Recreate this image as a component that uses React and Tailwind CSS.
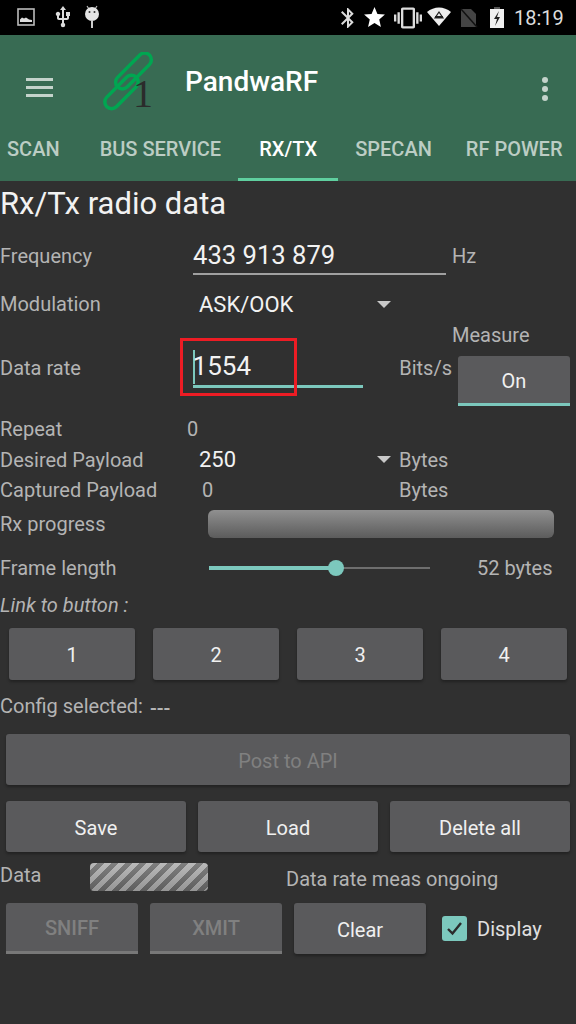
import { MdBluetooth, MdStar, MdUsb, MdVibration } from "react-icons/md";

const btn = "flex items-center justify-center rounded-[3px] bg-[#5a5a5c] shadow-[0_2px_3px_rgba(0,0,0,0.3)] text-[20px] pt-[2px] text-[#f0f0f0]";
const label = "text-[20px] text-[#b4b4b4]";

function StatusBar() {
  return (
    <div className="h-[35px] bg-black flex items-center text-[#dcdcdc]">
      <svg width="18" height="18" viewBox="0 0 18 18" className="ml-[17px] -mt-[1px]">
        <rect x="1" y="1" width="16" height="16" fill="none" stroke="#bbb" strokeWidth="1.6" />
        <path d="M3 14v-2.5l2-2 2 1 2-1 3 2 3 .5v2z" fill="#ddd" />
      </svg>
      <MdUsb size={24} className="ml-[16px] -mt-[2px]" />
      <svg width="16" height="23" viewBox="0 0 16 23" className="ml-[9px] -mt-[2px]">
        <path d="M3 1l2 3M13 1l-2 3" stroke="#bbb" strokeWidth="1.2" />
        <circle cx="8" cy="9" r="7" fill="#e4e4e4" />
        <circle cx="5.5" cy="7" r="1" fill="#333" />
        <circle cx="10.5" cy="7" r="1" fill="#333" />
        <rect x="7" y="15" width="2" height="8" fill="#ccc" />
      </svg>
      <MdBluetooth size={24} className="ml-[236px]" />
      <MdStar size={25} className="ml-[2px] text-white" />
      <MdVibration size={28} className="ml-[7px]" />
      <svg width="24" height="20" viewBox="0 0 24 20" className="ml-[5px] -mt-[2px]">
        <path d="M0 5C7-1 17-1 24 5L12 19z" fill="#eee" />
        <path d="M12 5l4 6H8z" fill="none" stroke="#222" strokeWidth="1.2" />
        <rect x="8" y="9" width="8" height="2" fill="#222" />
      </svg>
      <svg width="18" height="20" viewBox="0 0 18 20" className="ml-[9px]">
        <path d="M1 1h10l5 5v13H1z" fill="#444" />
        <path d="M1 1l16 18" stroke="#111" strokeWidth="1.5" />
      </svg>
      <svg width="14" height="21" viewBox="0 0 14 21" className="ml-[12px]">
        <rect x="4" y="0" width="6" height="3" fill="#555" />
        <rect x="0" y="2" width="14" height="19" fill="#f0f0f0" />
        <path d="M9 4L4 12h3l-2 7 5-9H7z" fill="#222" />
      </svg>
      <span className="ml-[10px] text-[20px]">18:19</span>
    </div>
  );
}

function Logo() {
  return (
    <div className="relative w-[52px] h-[62px] ml-[49px] mt-[17px]">
      <svg width="52" height="62" viewBox="0 0 52 62">
        <rect x="9" y="12.25" width="45" height="13.5" rx="6.75" transform="rotate(-45 31.5 19)" fill="none" stroke="#00a651" strokeWidth="3.5" />
        <rect x="-1.25" y="33.25" width="41.5" height="13.5" rx="6.75" transform="rotate(-45 19.5 40)" fill="none" stroke="#00a651" strokeWidth="3.5" />
      </svg>
      <span className="absolute left-[31px] top-[19px] font-['Liberation_Serif'] text-[40px] leading-[46px] text-[#2b2b2b]">1</span>
    </div>
  );
}

function AppBar() {
  return (
    <div className="h-[146px] bg-[#386b53] flex flex-col">
      <div className="h-[92px] flex items-start">
        <div className="w-[27px] ml-[26px] mt-[43px] flex flex-col gap-[5px]">
          <div className="h-[3px] bg-[#c4d3cb]" />
          <div className="h-[3px] bg-[#c4d3cb]" />
          <div className="h-[3px] bg-[#c4d3cb]" />
        </div>
        <Logo />
        <div className="ml-[31px] mt-[28px] text-[28px] leading-[38px] font-medium text-white">PandwaRF</div>
        <div className="ml-auto mr-[28px] mt-[42px] flex flex-col gap-[3px]">
          <div className="size-[6px] rounded-full bg-[#c4d3cb]" />
          <div className="size-[6px] rounded-full bg-[#c4d3cb]" />
          <div className="size-[6px] rounded-full bg-[#c4d3cb]" />
        </div>
      </div>
      <div className="h-[54px] flex text-[20px] font-medium text-[#bccdc4]">
        <div className="ml-[7px] mt-[7px]">SCAN</div>
        <div className="ml-[40px] mt-[7px]">BUS SERVICE</div>
        <div className="ml-[17px] w-[100px] h-full flex flex-col items-center border-b-[3px] border-[#5fcf9f] text-white pt-[7px]">RX/TX</div>
        <div className="ml-[17px] mt-[7px]">SPECAN</div>
        <div className="ml-[34px] mt-[7px]">RF POWER</div>
      </div>
    </div>
  );
}

function Triangle() {
  return <div className="w-0 h-0 border-x-[7px] border-x-transparent border-t-[7px] border-t-[#c8c8c8]" />;
}

export default function App() {
  return (
    <div className="min-h-screen bg-[#303030] font-['Roboto',sans-serif] overflow-hidden">
      <StatusBar />
      <AppBar />

      <div className="h-[46px] flex items-center text-[31px] text-[#f2f2f2]">Rx/Tx radio data</div>

      <div className="h-[50px] pt-[8px] flex items-center">
        <div className={`${label} w-[193px]`}>Frequency</div>
        <div className="w-[253px] h-[38px] flex items-center border-b-2 border-[#a0a0a0] text-[25.6px] text-[#f2f2f2]">433 913 879</div>
        <div className={`${label} ml-[6px]`}>Hz</div>
      </div>

      <div className="h-[46px] pt-[8px] flex items-center">
        <div className={`${label} w-[199px]`}>Modulation</div>
        <div className="w-[178px] text-[22px] text-[#f2f2f2]">ASK/OOK</div>
        <Triangle />
      </div>

      <div className="relative h-[84px] flex">
        <div className="w-[452px] pt-[6px] flex items-center">
          <div className={`${label} w-[193px]`}>Data rate</div>
          <div className="w-[171px] h-[40px] flex items-center border-b-[3px] border-[#7cc8bd] text-[26px] text-[#f2f2f2]">
            <div className="w-[2px] h-[34px] bg-[#7cc8bd] -mr-[2px]" />
            1554
          </div>
          <div className={`${label} ml-[36px]`}>Bits/s</div>
        </div>
        <div>
          <div className={`${label} h-[24px] leading-[24px]`}>Measure</div>
          <div className="mt-[9px] ml-[6px] w-[112px] h-[50px] flex items-center justify-center rounded-t-[3px] bg-[#5a5a5c] border-b-[3px] border-[#7cc8bd] pt-[3px] text-[20px] text-[#f0f0f0]">On</div>
        </div>
        {/* red annotation box drawn on top of the field */}
        <div className="absolute left-[180px] top-[15px] w-[117px] h-[58px] border-[3px] border-[#ed1c24]" />
      </div>

      <div className="mt-[7px] h-[30px] flex items-center">
        <div className={`${label} w-[187px]`}>Repeat</div>
        <div className={label}>0</div>
      </div>
      <div className="h-[31px] flex items-center">
        <div className={`${label} w-[199px]`}>Desired Payload</div>
        <div className="w-[178px] text-[22px] text-[#f2f2f2]">250</div>
        <Triangle />
        <div className={`${label} ml-[8px]`}>Bytes</div>
      </div>
      <div className="h-[30px] flex items-center">
        <div className={`${label} w-[202px]`}>Captured Payload</div>
        <div className={`${label} w-[197px]`}>0</div>
        <div className={label}>Bytes</div>
      </div>

      <div className="h-[38px] flex items-center">
        <div className={`${label} w-[208px]`}>Rx progress</div>
        <div className="w-[346px] h-[28px] rounded-[6px] bg-gradient-to-b from-[#909090] to-[#5c5c5c]" />
      </div>

      <div className="h-[50px] flex items-center">
        <div className={`${label} w-[209px]`}>Frame length</div>
        <div className="relative w-[221px] h-[18px] flex items-center">
          <div className="w-[128px] h-[4px] bg-[#7cc8bd]" />
          <div className="flex-1 h-[2px] bg-[#6e6e6e]" />
          <div className="absolute left-[119px] top-[1px] size-[16px] rounded-full bg-[#7cc8bd]" />
        </div>
        <div className={`${label} ml-[47px]`}>52 bytes</div>
      </div>

      <div className={`${label} h-[24px] leading-[24px] italic`}>Link to button :</div>

      <div className="mt-[11px] pl-[9px] flex gap-[18px]">
        <div className={`${btn} w-[126px] h-[52px]`}>1</div>
        <div className={`${btn} w-[126px] h-[52px]`}>2</div>
        <div className={`${btn} w-[126px] h-[52px]`}>3</div>
        <div className={`${btn} w-[126px] h-[52px]`}>4</div>
      </div>

      <div className="h-[52px] flex items-center">
        <div className={`${label} w-[150px]`}>Config selected:</div>
        <div className={`${label} mt-[3px] font-medium`}>---</div>
      </div>

      <div className={`${btn} mt-[2px] ml-[6px] w-[564px] h-[51px] !text-[#808080]`}>Post to API</div>

      <div className="mt-[16px] pl-[6px] flex gap-[12px]">
        <div className={`${btn} w-[180px] h-[51px]`}>Save</div>
        <div className={`${btn} w-[180px] h-[51px]`}>Load</div>
        <div className={`${btn} w-[180px] h-[51px]`}>Delete all</div>
      </div>

      <div className="h-[51px] flex items-start">
        <div className={`${label} mt-[11px] w-[90px] h-[24px] leading-[24px]`}>Data</div>
        <div className="mt-[11px] w-[118px] h-[28px] rounded-[4px] bg-[linear-gradient(rgba(255,255,255,0.12),rgba(0,0,0,0.15)),repeating-linear-gradient(135deg,#b0b0b0_0px,#b0b0b0_5px,#6e6e6e_5px,#6e6e6e_10px)]" />
        <div className={`${label} mt-[15px] ml-[78px] h-[24px] leading-[24px]`}>Data rate meas ongoing</div>
      </div>

      <div className="pl-[6px] flex items-center gap-[12px]">
        <div className="w-[132px] h-[51px] flex items-center justify-center rounded-t-[3px] bg-[#5a5a5c] border-b-[3px] border-[#787878] pt-[1px] text-[20px] font-medium text-[#808080]">SNIFF</div>
        <div className="w-[132px] h-[51px] flex items-center justify-center rounded-t-[3px] bg-[#5a5a5c] border-b-[3px] border-[#787878] pt-[1px] text-[20px] font-medium text-[#808080]">XMIT</div>
        <div className={`${btn} w-[132px] h-[51px]`}>Clear</div>
        <div className="ml-[4px] size-[25px] rounded-[3px] bg-[#7cc8bd] flex items-center justify-center">
          <svg width="19" height="19" viewBox="0 0 19 19">
            <path d="M3 10l4.5 4.5L16 4" fill="none" stroke="#2b2b2b" strokeWidth="2.4" />
          </svg>
        </div>
        <div className="text-[20px] text-[#e0e0e0] -ml-[2px]">Display</div>
      </div>
    </div>
  );
}
